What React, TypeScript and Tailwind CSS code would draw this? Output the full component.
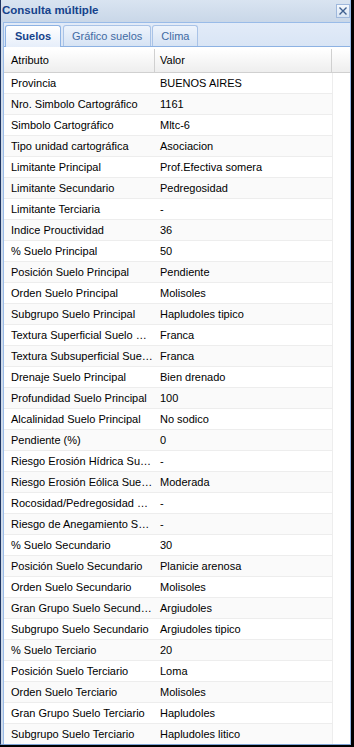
import React from 'react';

const rows: [string, string][] = [
  ['Provincia', 'BUENOS AIRES'],
  ['Nro. Simbolo Cartográfico', '1161'],
  ['Simbolo Cartográfico', 'Mltc-6'],
  ['Tipo unidad cartográfica', 'Asociacion'],
  ['Limitante Principal', 'Prof.Efectiva somera'],
  ['Limitante Secundario', 'Pedregosidad'],
  ['Limitante Terciaria', '-'],
  ['Indice Prouctividad', '36'],
  ['% Suelo Principal', '50'],
  ['Posición Suelo Principal', 'Pendiente'],
  ['Orden Suelo Principal', 'Molisoles'],
  ['Subgrupo Suelo Principal', 'Hapludoles tipico'],
  ['Textura Superficial Suelo Principal', 'Franca'],
  ['Textura Subsuperficial Suelo Principal', 'Franca'],
  ['Drenaje Suelo Principal', 'Bien drenado'],
  ['Profundidad Suelo Principal', '100'],
  ['Alcalinidad Suelo Principal', 'No sodico'],
  ['Pendiente (%)', '0'],
  ['Riesgo Erosión Hídrica Suelo Principal', '-'],
  ['Riesgo Erosión Eólica Suelo Principal', 'Moderada'],
  ['Rocosidad/Pedregosidad Suelo Principal', '-'],
  ['Riesgo de Anegamiento Suelo Principal', '-'],
  ['% Suelo Secundario', '30'],
  ['Posición Suelo Secundario', 'Planicie arenosa'],
  ['Orden Suelo Secundario', 'Molisoles'],
  ['Gran Grupo Suelo Secundario', 'Argiudoles'],
  ['Subgrupo Suelo Secundario', 'Argiudoles tipico'],
  ['% Suelo Terciario', '20'],
  ['Posición Suelo Terciario', 'Loma'],
  ['Orden Suelo Terciario', 'Molisoles'],
  ['Gran Grupo Suelo Terciario', 'Hapludoles'],
  ['Subgrupo Suelo Terciario', 'Hapludoles litico'],
];

const font = { fontFamily: '"Liberation Sans", Arial, sans-serif' };

function Tab({ label, active }: { label: string; active?: boolean }) {
  if (active) {
    return (
      <div className="relative z-10 -mb-px flex h-[22px] w-[56px] items-center justify-center rounded-t-[3px] border border-b-0 border-[#8db2e3] bg-gradient-to-b from-[#ffffff] to-[#e6eefa] text-[11px] font-bold text-[#15428b]">
        {label}
      </div>
    );
  }
  return (
    <div className="flex h-[21px] items-center justify-center rounded-t-[3px] border border-b-0 border-[#a9c3e7] bg-gradient-to-b from-[#eef4fc] to-[#d6e3f4] px-[8px] text-[11px] text-[#416aa3]">
      {label}
    </div>
  );
}

export default function App() {
  return (
    <div className="h-[747px] w-[354px] overflow-hidden bg-black" style={font}>
      <div className="flex h-[745px] w-[351px] flex-col overflow-hidden border-b border-l border-r border-l-[#1e3563] border-r-[#99bbe8] border-b-[#7ea3d6] bg-[#cfdbea]">
        {/* title bar */}
        <div className="flex h-[22px] shrink-0 items-center justify-between bg-gradient-to-b from-[#d9e4f1] to-[#c9d7e8] pl-[1px]">
          <span className="text-[11.5px] font-bold text-[#15428b]">Consulta múltiple</span>
          <div className="flex h-[14px] w-[14px] items-center justify-center border border-[#9fb8dc] bg-gradient-to-b from-[#f4f8fd] to-[#d8e4f3]">
            <svg width="10" height="10" viewBox="0 0 10 10">
              <path d="M1.5 1.5 L8.5 8.5 M8.5 1.5 L1.5 8.5" stroke="#3e5f8f" strokeWidth="1.4" />
            </svg>
          </div>
        </div>

        {/* panel */}
        <div className="ml-[2px] flex min-h-0 flex-1 flex-col border-l border-t border-[#99bbe8] bg-white">
          <div className="flex h-[24px] shrink-0 items-end gap-[2px] border-b border-[#8db2e3] bg-gradient-to-b from-[#e2ebf8] to-[#d9e5f5] pl-[1px]">
            <Tab label="Suelos" active />
            <Tab label="Gráfico suelos" />
            <div className="-ml-px">
              <Tab label="Clima" />
            </div>
          </div>

          <div className="min-h-0 flex-1 overflow-hidden pt-[2px]">
            <div className="flex h-[24px] border-b border-[#d0d0d0] bg-gradient-to-b from-[#ffffff] to-[#eeeeee] text-[11px] text-black">
              <div className="flex w-[151px] items-center border-r border-[#d0d0d0] pl-[7px]">Atributo</div>
              <div className="flex w-[177px] items-center border-r border-[#d0d0d0] pl-[5px]">Valor</div>
              <div className="flex-1" />
            </div>
            {rows.map(([k, v], i) => (
              <div
                key={i}
                className={`flex h-[21px] w-[329px] items-center border-b border-r border-[#ededed] text-[11px] text-black ${i % 2 === 1 ? 'bg-[#fafafa]' : 'bg-white'}`}
              >
                <div className="w-[151px] truncate pl-[7px] pr-[2px]">{k}</div>
                <div className="flex-1 truncate pl-[5px]">{v}</div>
              </div>
            ))}
          </div>
        </div>
      </div>
    </div>
  );
}
